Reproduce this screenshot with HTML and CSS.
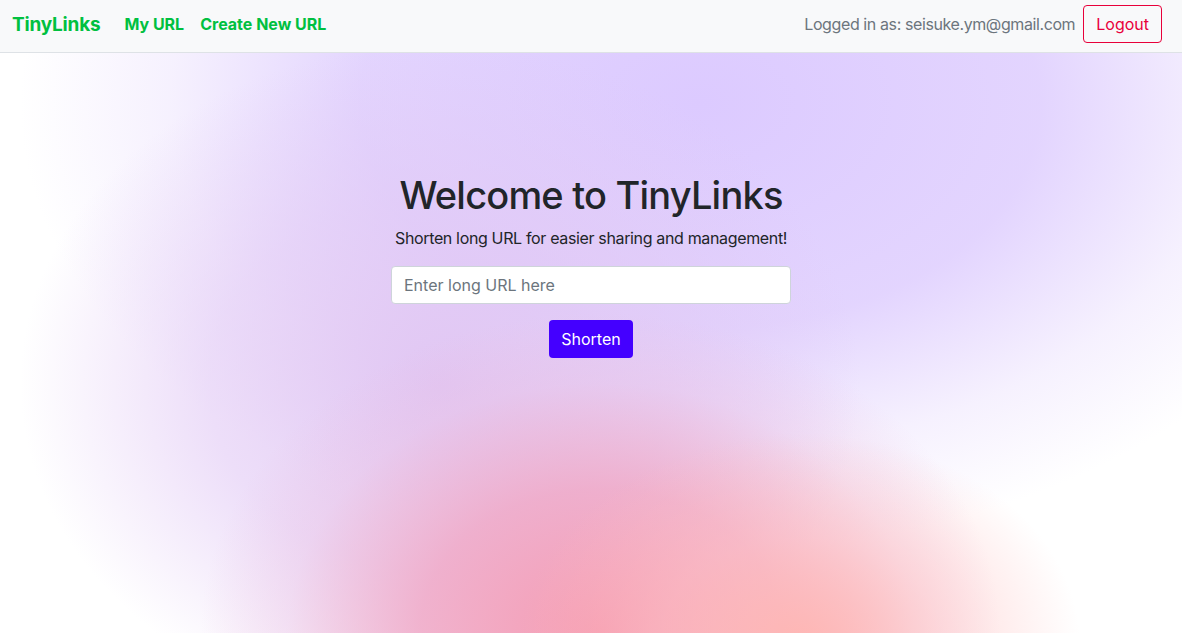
FILE: index.html
```html
<!DOCTYPE html>
<html lang="en">
<head>
<meta charset="utf-8">
<title>TinyLinks</title>
<link rel="stylesheet" href="styles.css">
</head>
<body>
<nav class="navbar">
  <div class="nav-left">
    <a class="brand" href="#">TinyLinks</a>
    <a class="nav-link" href="#">My URL</a>
    <a class="nav-link" href="#">Create New URL</a>
  </div>
  <div class="nav-right">
    <span class="user">Logged in as: seisuke.ym@gmail.com</span>
    <button class="logout">Logout</button>
  </div>
</nav>
<main class="hero">
  <div class="content">
    <h1 class="title">Welcome to TinyLinks</h1>
    <p class="subtitle">Shorten long URL for easier sharing and management!</p>
    <input class="url-input" type="text" placeholder="Enter long URL here">
    <button class="shorten">Shorten</button>
  </div>
</main>
</body>
</html>
```
FILE: styles.css
```css
* { box-sizing: border-box; }
html, body { margin: 0; height: 100%; }
body {
  font-family: Inter, "Noto Sans", sans-serif;
  color: #212529;
  background: #fff;
  overflow: hidden;
}
.navbar {
  height: 53px;
  background: #f8f9fa;
  border-bottom: 1px solid #dee2e6;
  display: flex;
  align-items: center;
  justify-content: space-between;
  padding: 0 20px 4px 12px;
}
.nav-left { display: flex; align-items: center; gap: 16px; }
.brand {
  color: #00c040;
  font-weight: 700;
  font-size: 19px;
  text-decoration: none;
  margin-right: 8px;
  letter-spacing: -0.2px;
}
.nav-link {
  color: #00c040;
  font-weight: 700;
  font-size: 16px;
  text-decoration: none;
}
.nav-right { display: flex; align-items: center; gap: 8px; }
.user { color: #6c757d; font-size: 16px; letter-spacing: -0.4px; }
.logout {
  font-family: inherit;
  font-size: 16px;
  color: #e8003a;
  background: transparent;
  border: 1px solid #e8003a;
  border-radius: 4px;
  height: 38px;
  padding: 0 12px;
}
.hero {
  height: calc(100% - 53px);
  background:
    radial-gradient(ellipse 280px 210px at 800px 590px, rgba(255,182,178,0.95), rgba(255,190,190,0.5) 50%, rgba(255,255,255,0) 100%),
    radial-gradient(ellipse 400px 320px at 600px 580px, rgba(245,155,178,1), rgba(240,165,195,0.8) 45%, rgba(235,190,225,0.35) 78%, rgba(255,255,255,0) 100%),
    radial-gradient(ellipse 420px 340px at 440px 330px, rgba(224,196,242,0.95), rgba(225,200,245,0.6) 55%, rgba(255,255,255,0) 100%),
    radial-gradient(ellipse 680px 450px at 700px 50px, rgba(220,202,255,1), rgba(222,205,254,0.85) 50%, rgba(232,220,253,0.4) 78%, rgba(255,255,255,0) 100%),
    #fff;
}
.content {
  display: flex;
  flex-direction: column;
  align-items: center;
  padding-top: 118px;
}
.title {
  margin: 0;
  font-size: 38px;
  font-weight: 500;
  line-height: 48px;
  color: #212529;
  letter-spacing: -0.8px;
}
.subtitle {
  margin: 7px 0 16px;
  font-size: 16px;
  line-height: 24px;
  letter-spacing: -0.35px;
}
.url-input {
  width: 400px;
  height: 38px;
  border: 1px solid #ced4da;
  border-radius: 4px;
  padding: 0 12px;
  font-family: inherit;
  font-size: 16px;
  color: #212529;
  background: #fff;
}
.url-input::placeholder { color: #6c757d; }
.shorten {
  margin-top: 16px;
  height: 38px;
  padding: 0 12px;
  background: #4400ff;
  color: #fff;
  border: none;
  border-radius: 4px;
  font-family: inherit;
  font-size: 16px;
}
```
